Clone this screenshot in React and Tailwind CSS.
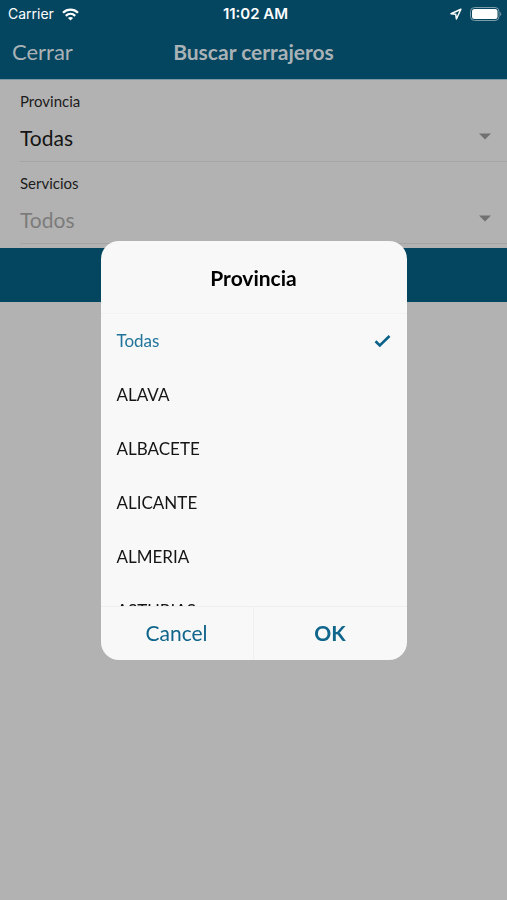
import React, { useState } from 'react';

const provincias = ['Todas', 'ALAVA', 'ALBACETE', 'ALICANTE', 'ALMERIA', 'ASTURIAS'];

const StatusBar = () => (
  <div className="grid grid-cols-[1fr_auto_1fr] items-center h-7 pl-2 pr-1 text-white text-sm font-['Inter',sans-serif]">
    <div className="flex items-center gap-2">
      <span>Carrier</span>
      <svg width="17" height="13" viewBox="0 0 17 13" fill="none" stroke="currentColor" strokeWidth="2.3">
        <path d="M1 4.7C5.2 .6 11.8 .6 16 4.7" />
        <path d="M3.8 7.8C6.5 5.3 10.5 5.3 13.2 7.8" />
        <path d="M8.5 12.6L5.9 10C7.3 8.6 9.7 8.6 11.1 10Z" fill="currentColor" stroke="none" />
      </svg>
    </div>
    <span className="text-center text-[15px] font-semibold whitespace-nowrap">11:02 AM</span>
    <div className="flex items-center justify-end gap-2">
      <svg width="12" height="12" viewBox="0 0 12 12" fill="none" stroke="currentColor" strokeWidth="1.5" strokeLinejoin="round">
        <path d="M10.9 1.2L1 5.8L5.7 6.2L6.4 11Z" />
      </svg>
      <svg width="33" height="14" viewBox="0 0 33 14" fill="none">
        <rect x=".5" y=".5" width="28.5" height="13" rx="4" stroke="#7d9dab" />
        <rect x="2" y="2" width="25.5" height="10" rx="2.5" fill="#fff" />
        <path d="M30.2 5V9C31.6 8.4 31.6 5.6 30.2 5Z" fill="#7d9dab" />
      </svg>
    </div>
  </div>
);

const SelectField = ({ id, label, value, disabled }) => (
  <div className="ml-5 h-[82px] border-b border-[#a5a5a5] pt-[11px]">
    <label htmlFor={id} className="block text-[15px] leading-5 text-[#1c1c1c]">
      {label}
    </label>
    <div className="relative mt-2">
      <select
        id={id}
        value={value}
        disabled={disabled}
        onChange={() => {}}
        className="block w-full h-[38px] appearance-none bg-transparent text-[21px] text-[#151515] opacity-100 disabled:text-[#7c7c7c]"
      >
        <option>{value}</option>
      </select>
      <svg className="absolute right-4 top-3.5 pointer-events-none" width="12" height="7" viewBox="0 0 12 7">
        <path d="M0 .5H12L6 6.5Z" fill="#717171" />
      </svg>
    </div>
  </div>
);

const ProvinciaDialog = ({ selected, onSelect, onClose }) => (
  <div className="fixed inset-0 flex items-center justify-center">
    <div
      role="dialog"
      aria-labelledby="dialog-title"
      className="w-[306px] rounded-[18px] bg-[#f8f8f8] overflow-hidden"
    >
      <h2
        id="dialog-title"
        className="flex items-center justify-center h-[73px] pt-0.5 border-b border-[#f2f2f2] text-[21px] font-bold text-black"
      >
        Provincia
      </h2>
      <div className="h-[292px] overflow-y-auto [scrollbar-width:none]">
        {provincias.map((p) => (
          <label
            key={p}
            className="flex items-center justify-between h-[54px] px-4 text-[17px] text-[#151515] has-checked:text-[#20749b]"
          >
            <input
              type="radio"
              name="provincia"
              className="sr-only"
              checked={selected === p}
              onChange={() => onSelect(p)}
            />
            <span>{p}</span>
            {selected === p && (
              <svg width="17" height="14" viewBox="0 0 17 14" fill="none" stroke="#0b6289" strokeWidth="2.6">
                <path d="M1.5 7.2L5.8 11.4L15.5 2" />
              </svg>
            )}
          </label>
        ))}
      </div>
      <div className="grid grid-cols-2 h-[54px] border-t border-[#efefef] text-[21px] text-[#0f658b]">
        <button type="button" onClick={onClose} className="border-r border-[#f0f0f0]">
          Cancel
        </button>
        <button type="button" onClick={onClose} className="font-bold">
          OK
        </button>
      </div>
    </div>
  </div>
);

const App = () => {
  const [provincia, setProvincia] = useState('Todas');
  const [open, setOpen] = useState(true);

  return (
    <div className="min-h-screen bg-[#b2b2b2] font-['Lato',sans-serif]">
      <header className="bg-[#04455f] border-b border-[#7b98a4]">
        <StatusBar />
        <div className="grid grid-cols-[1fr_auto_1fr] items-center h-[51px] px-3 pb-1 text-[#a9b2b6]">
          <button type="button" className="justify-self-start text-[22px]">
            Cerrar
          </button>
          <h1 className="text-[21px] font-bold">Buscar cerrajeros</h1>
        </div>
      </header>

      <main>
        <SelectField id="provincia" label="Provincia" value={provincia} />
        <SelectField id="servicios" label="Servicios" value="Todos" disabled />
        <button
          type="button"
          aria-label="Buscar"
          onClick={() => setOpen(true)}
          className="block w-full h-[54px] mt-1 bg-[#04455f]"
        />
      </main>

      {open && (
        <ProvinciaDialog selected={provincia} onSelect={setProvincia} onClose={() => setOpen(false)} />
      )}
    </div>
  );
};

export default App;
